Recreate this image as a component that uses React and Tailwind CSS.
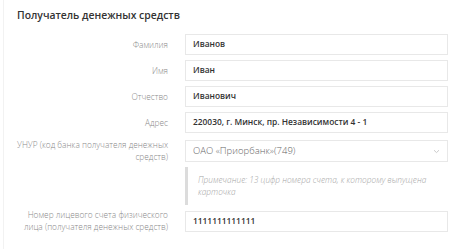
import React from "react";

function Row({ label, children, className = "" }) {
  return (
    <div className={`grid grid-cols-[151px_263px] gap-x-[17px] items-center ${className}`}>
      <div className="text-right whitespace-nowrap text-[8.3px] leading-[12px] font-light text-[#8a8a8a]">{label}</div>
      {children}
    </div>
  );
}

function Field({ value }) {
  return (
    <div className="h-[21px] border border-[#e8e8e8] bg-white flex items-center pl-[7px] text-[8.4px] font-semibold text-[#333]">
      {value}
    </div>
  );
}

export default function App() {
  return (
    <div className="w-[474px] h-[249px] bg-white overflow-hidden" style={{ fontFamily: '"Open Sans", "Noto Sans", sans-serif' }}>
      <div className="ml-[3px] h-full border-l border-[#f2f2f2] pl-[13px] pt-[8px]">
        <div className="text-[10.4px] leading-[14px] font-semibold text-[#333]">Получатель денежных средств</div>
        <div className="mt-[12px] flex flex-col">
          <Row label="Фамилия"><Field value="Иванов" /></Row>
          <Row label="Имя" className="mt-[5px]"><Field value="Иван" /></Row>
          <Row label="Отчество" className="mt-[5px]"><Field value="Иванович" /></Row>
          <Row label="Адрес" className="mt-[5px]"><Field value="220030, г. Минск, пр. Независимости 4 - 1" /></Row>
          <Row label={<>УНУР (код банка получателя денежных<br />средств)</>} className="mt-[6px]">
            <div className="h-[22px] border border-[#e8e8e8] bg-white flex items-center justify-between pl-[7px] pr-[7px] text-[9.5px] font-light text-[#666]">
              <span>ОАО «Приорбанк»(749)</span>
              <svg width="7" height="5" viewBox="0 0 7 5" fill="none">
                <path d="M1 1.2 L3.5 3.6 L6 1.2" stroke="#c5c5c5" strokeWidth="0.9" />
              </svg>
            </div>
          </Row>
          <Row label="" className="mt-[4px]">
            <div className="border-l-[3px] border-[#dcdcdc] pl-[10px] pr-[14px] py-[7px] text-[8.3px] leading-[12px] italic font-light text-[#a5a5a5]">
              Примечание: 13 цифр номера счета, к которому выпущена карточка
            </div>
          </Row>
          <Row label={<>Номер лицевого счета физического<br />лица (получателя денежных средств)</>} className="mt-[4px]">
            <Field value="1111111111111" />
          </Row>
        </div>
      </div>
    </div>
  );
}
